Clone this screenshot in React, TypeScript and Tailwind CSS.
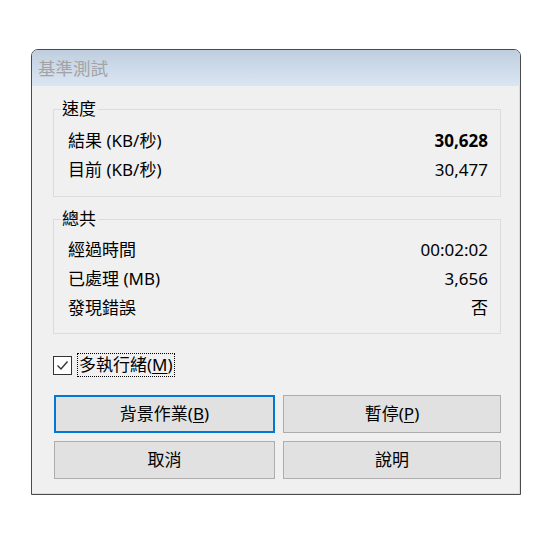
import React from "react";

const font = { fontFamily: '"Noto Sans", "Noto Sans CJK TC", sans-serif' };

function Row({ label, value, bold }: { label: string; value: string; bold?: boolean }) {
  return (
    <div className="flex h-[29px] items-center justify-between">
      <span>{label}</span>
      <span className={bold ? "font-bold" : ""}>{value}</span>
    </div>
  );
}

function Btn({ children, focused, w }: { children: React.ReactNode; focused?: boolean; w: string }) {
  return (
    <div
      className={
        "flex h-[38px] items-center justify-center bg-[#e1e1e1] " +
        w +
        (focused ? " border-2 border-[#0078d7]" : " border border-[#adadad]")
      }
    >
      {children}
    </div>
  );
}

export default function App() {
  return (
    <div className="h-[552px] w-[552px] bg-white pl-[31px] pt-[49px] text-[17px] text-black" style={font}>
      <div className="w-[490px] overflow-hidden rounded-t-[7px] border border-[#4a4a4a]">
        <div className="flex h-[36px] items-center bg-gradient-to-b from-[#bfcedf] to-[#dbe6f3] pl-[6px] text-[17.5px] text-[#a3a3a3]">
          基準測試
        </div>
        <div className="border-b border-r border-[#d3deea] bg-[#f0f0f0] pb-[14px] pl-[21px] pt-[12px]">
          <fieldset className="w-[448px] border border-[#dcdcdc]">
            <legend className="ml-[7px] h-[22px] pl-[1px] pr-[2px] leading-[22px]">速度</legend>
            <div className="pb-[12px] pl-[14px] pr-[12px] pt-[6px]">
              <Row label="結果 (KB/秒)" value="30,628" bold />
              <Row label="目前 (KB/秒)" value="30,477" />
            </div>
          </fieldset>
          <fieldset className="mt-[11px] w-[448px] border border-[#dcdcdc]">
            <legend className="ml-[7px] h-[22px] pl-[1px] pr-[2px] leading-[22px]">總共</legend>
            <div className="pb-[11px] pl-[14px] pr-[12px] pt-[5px]">
              <Row label="經過時間" value="00:02:02" />
              <Row label="已處理 (MB)" value="3,656" />
              <Row label="發現錯誤" value="否" />
            </div>
          </fieldset>
          <div className="mt-[19px] flex h-[24px] items-center">
            <div className="flex h-[19px] w-[19px] items-center justify-center border border-[#333333] bg-white">
              <svg width="13" height="13" viewBox="0 0 13 13">
                <polyline points="1.5,6.5 5,10 11.5,2.5" fill="none" stroke="#333333" strokeWidth="1.4" />
              </svg>
            </div>
            <div className="ml-[5px] flex h-[24px] items-center border border-dotted border-black pl-[1px] pr-[1px]">
              多執行緒(<span className="underline underline-offset-2">M</span>)
            </div>
          </div>
          <div className="ml-[1px] mt-[18px] flex gap-[8px]">
            <Btn focused w="w-[221px]">
              背景作業(<span className="underline underline-offset-2">B</span>)
            </Btn>
            <Btn w="w-[218px]">
              暫停(<span className="underline underline-offset-2">P</span>)
            </Btn>
          </div>
          <div className="ml-[1px] mt-[8px] flex gap-[8px]">
            <Btn w="w-[221px]">取消</Btn>
            <Btn w="w-[218px]">說明</Btn>
          </div>
        </div>
      </div>
    </div>
  );
}
